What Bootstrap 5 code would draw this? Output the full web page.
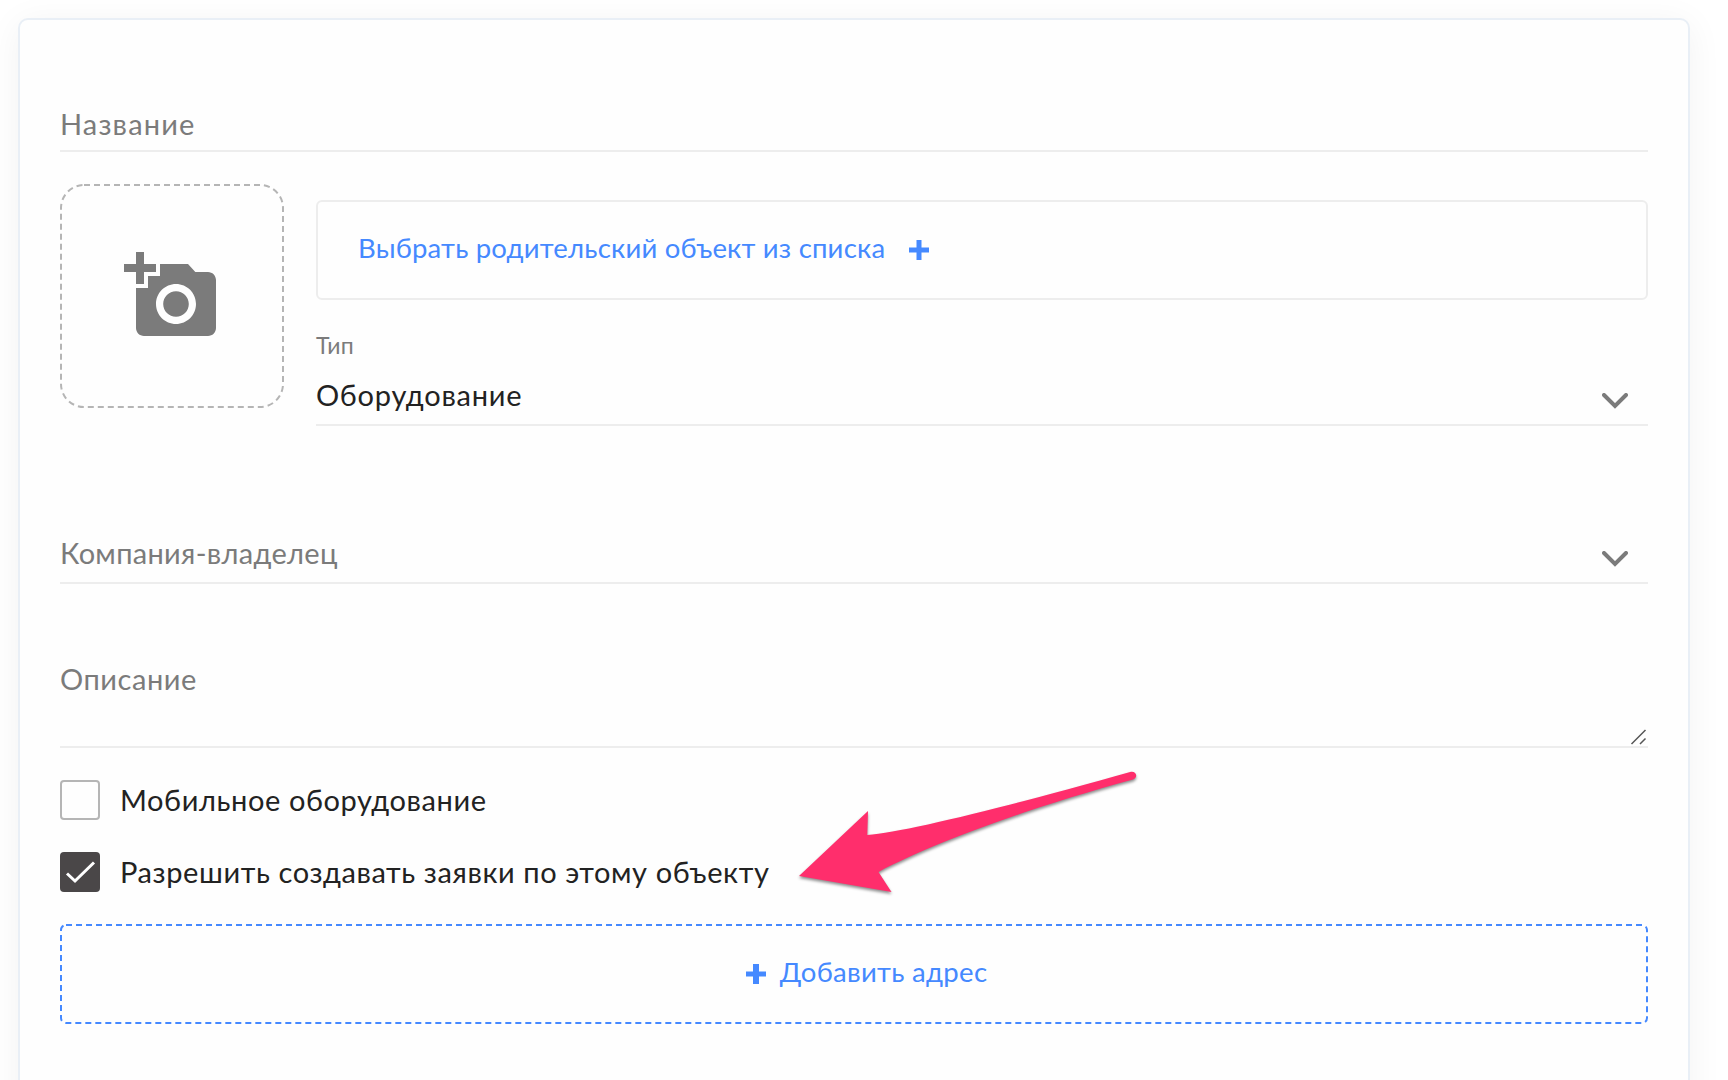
<!DOCTYPE html>
<html lang="ru">
<head>
<meta charset="utf-8">
<meta name="viewport" content="width=device-width, initial-scale=1">
<title>Новый объект</title>
<link rel="stylesheet" href="https://cdn.jsdelivr.net/npm/bootstrap@5.3.0/dist/css/bootstrap.min.css">
<style>
  :root { --ink: #222; --muted: #7b7b7b; --rule: #ededed; --accent: #4589ff; }
  body { height: 1080px; overflow: hidden; background: #fff; color: var(--ink); font: 29px/36px Lato, "Open Sans", sans-serif; letter-spacing: .4px; }
  .object-card { width: 1672px; height: 1110px; margin: 18px 0 0 18px; padding: 0 40px; border: 2px solid #e9eff6; border-radius: 10px; background: #fefefe; box-shadow: 0 5px 36px rgba(0,0,0,.055); }
  .line-field { border-bottom: 2px solid var(--rule); color: var(--muted); padding-bottom: 11px; }
  .field-name { height: 132px; padding-bottom: 8px; letter-spacing: 1.15px; }
  .field-type { height: 67px; color: var(--ink); letter-spacing: .76px; }
  .field-owner { height: 158px; letter-spacing: .3px; }
  .field-note { height: 164px; padding: 77px 0 0; letter-spacing: .55px; }
  .chevron { width: 26px; height: 16px; margin: 0 20px 4px 0; }
  .grip { right: 1px; bottom: 0; width: 18px; height: 18px; }
  .object-main { margin-top: 32px; gap: 32px; }
  .photo-drop { width: 224px; height: 224px; }
  .outline { inset: 0; width: 100%; height: 100%; }
  .parent-box { height: 100px; margin-top: 16px; padding: 0 40px 5px; border: 2px solid var(--rule); border-radius: 6px; }
  .act { color: var(--accent); font-size: 27.5px; letter-spacing: .19px; }
  .type-label { margin-top: 31px; color: var(--muted); font-size: 23px; line-height: 28px; letter-spacing: .25px; }
  .check-line { height: 40px; margin-top: 32px; gap: 20px; letter-spacing: .6px; }
  .check-line span { padding-bottom: 1px; }
  .tick { width: 40px; height: 40px; border: 2px solid #b5b5b5; border-radius: 4px; }
  .tick.on { border: 0; background: #4a4748; }
  .add-address { height: 100px; margin-top: 32px; gap: 14px; padding: 0 0 4px 25px; border: 0; background: none; letter-spacing: .3px; }
  .pointer { left: 790px; top: 760px; filter: drop-shadow(0 2px 1.5px rgba(0,0,0,.45)); }
</style>
</head>
<body>
<form class="object-card">
  <div class="line-field field-name d-flex align-items-end">Название</div>

  <div class="object-main d-flex">
    <div class="photo-drop position-relative d-flex align-items-center justify-content-center flex-shrink-0">
      <svg class="outline position-absolute"><rect x="1" y="1" width="222" height="222" rx="23" fill="none" stroke="#b5b5b5" stroke-width="2" stroke-dasharray="6 4"/></svg>
      <svg width="96" height="96" viewBox="0 0 24 24" fill="#7b7b7b"><path d="M3 4V1h2v3h3v2H5v3H3V6H0V4h3zm3 6V7h3V4h7l1.83 2H21c1.1 0 2 .9 2 2v12c0 1.1-.9 2-2 2H5c-1.1 0-2-.9-2-2V10h3zm7 9c2.76 0 5-2.24 5-5s-2.24-5-5-5-5 2.24-5 5 2.24 5 5 5zm-3.2-5c0 1.77 1.43 3.2 3.2 3.2s3.2-1.43 3.2-3.2-1.43-3.2-3.2-3.2-3.2 1.43-3.2 3.2z"/></svg>
    </div>
    <div class="flex-grow-1">
      <div class="parent-box act d-flex align-items-center">
        <span>Выбрать родительский объект из списка</span>
        <svg class="ms-4 mt-1" width="20" height="20" viewBox="0 0 20 20"><path d="M7.500 0h5v7.500H20v5h-7.500V20h-5v-7.500H0v-5h7.500z" fill="currentColor"/></svg>
      </div>
      <div class="type-label">Тип</div>
      <div class="line-field field-type d-flex align-items-end justify-content-between">
        <span>Оборудование</span>
        <svg class="chevron" viewBox="0 0 26 16"><path d="M2 2l11 11L24 2" fill="none" stroke="#7b7b7b" stroke-width="4" stroke-linecap="round"/></svg>
      </div>
    </div>
  </div>

  <div class="line-field field-owner d-flex align-items-end justify-content-between">
    <span>Компания-владелец</span>
    <svg class="chevron" viewBox="0 0 26 16"><path d="M2 2l11 11L24 2" fill="none" stroke="#7b7b7b" stroke-width="4" stroke-linecap="round"/></svg>
  </div>

  <div class="line-field field-note position-relative">Описание
    <svg class="grip position-absolute" viewBox="0 0 18 18"><path d="M2.5 16L16.5 2M11 16l5.500-5.500" fill="none" stroke="#555" stroke-width="1.500"/></svg>
  </div>

  <div class="check-line d-flex align-items-center">
    <div class="tick"></div><span>Мобильное оборудование</span>
  </div>
  <div class="check-line d-flex align-items-center">
    <div class="tick on"><svg class="d-block" width="40" height="40" viewBox="0 0 40 40"><path d="M7 21.500l8 7.500L34 10.500" fill="none" stroke="#fff" stroke-width="3"/></svg></div><span>Разрешить создавать заявки по этому объекту</span>
  </div>

  <button type="button" class="add-address act position-relative d-flex w-100 align-items-center justify-content-center">
    <svg class="outline position-absolute"><rect x="1" y="1" width="1586" height="98" rx="5" fill="none" stroke="#4589ff" stroke-width="2" stroke-dasharray="6 4"/></svg>
    <svg class="mt-1" width="20" height="20" viewBox="0 0 20 20"><path d="M7 0h6v7.500h7v5h-7V20H7v-7.500H0v-5h7z" fill="currentColor"/></svg>
    <span>Добавить адрес</span>
  </button>
</form>

<svg class="pointer position-absolute" width="360" height="150" viewBox="790 760 360 150"><path d="M799 876L868 811L867.300 835C905 832 1010 806 1131 771.700C1137 771 1138 778 1133 779.500C1035 806 935 842 878.500 872L891.500 892Z" fill="#ff2e6c"/></svg>
<script src="https://cdn.jsdelivr.net/npm/bootstrap@5.3.0/dist/js/bootstrap.bundle.min.js"></script>
</body>
</html>
